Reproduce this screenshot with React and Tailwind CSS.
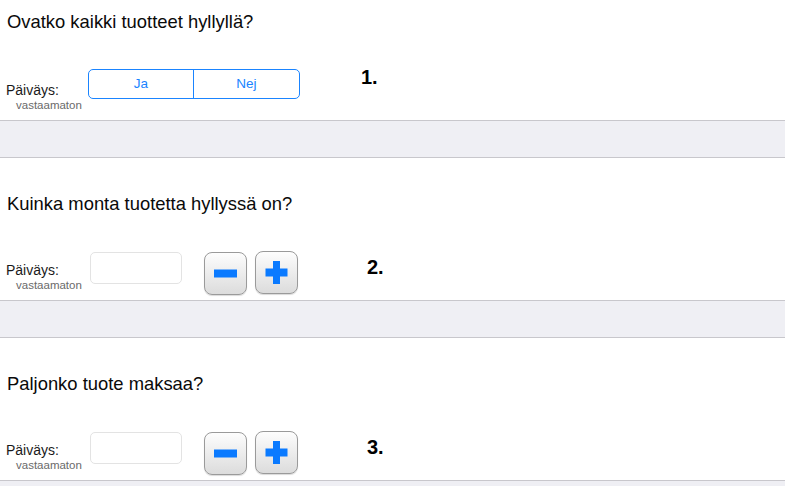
import React from "react";

const font = { fontFamily: '"Liberation Sans", Arial, sans-serif' };

function Label({ mt }) {
  return (
    <div className={`flex flex-col ${mt}`}>
      <div className="text-[14px] leading-[16px] text-[#1a1a1a]">Päiväys:</div>
      <div className="pl-[10px] text-[11.5px] leading-[14px] text-[#6a6a6a]">vastaamaton</div>
    </div>
  );
}

function StepButton({ kind, mt }) {
  return (
    <div
      className={`${mt} flex h-[43px] w-[43px] items-center justify-center rounded-[8px] border border-[#9a9a9a] bg-gradient-to-b from-[#fdfdfd] to-[#dcdcdc] shadow-[0_1px_1px_rgba(0,0,0,0.15)]`}
    >
      <svg width="23" height="23" viewBox="0 0 23 23">
        {kind === "plus" ? (
          <>
            <rect x="0.5" y="7.5" width="22" height="8" fill="#0a7aff" />
            <rect x="8" y="0" width="7" height="23" fill="#0a7aff" />
          </>
        ) : (
          <rect x="0" y="7.5" width="23" height="8" fill="#0a7aff" />
        )}
      </svg>
    </div>
  );
}

function Band() {
  return <div className="h-[38px] w-[785px] border-y border-[#c8c7cc] bg-[#efeff4]" />;
}

function NumberSection({ title, num }) {
  return (
    <div className="h-[142px] w-[785px] bg-white pt-[35px]">
      <div className="pl-[7px] text-[18.4px] leading-[22px] text-[#0a0a0a]">{title}</div>
      <div className="mt-[36px] flex items-start pl-[6px]">
        <div className="w-[84px]">
          <Label mt="mt-[11px]" />
        </div>
        <div className="mt-[1px] h-[32px] w-[92px] rounded-[5px] border border-[#e3e3e3] bg-white" />
        <div className="ml-[22px]">
          <StepButton kind="minus" mt="mt-[1px]" />
        </div>
        <div className="ml-[8px]">
          <StepButton kind="plus" mt="mt-0" />
        </div>
        <div className="ml-[69px] mt-[6px] text-[20px] font-bold leading-[20px] text-black">{num}</div>
      </div>
    </div>
  );
}

export default function App() {
  return (
    <div className="h-[486px] w-[812px] overflow-hidden bg-white" style={font}>
      <div className="h-[120px] w-[785px] bg-white pt-[11px]">
        <div className="pl-[7px] text-[18.4px] leading-[22px] text-[#0a0a0a]">Ovatko kaikki tuotteet hyllyllä?</div>
        <div className="mt-[34px] flex items-start pl-[6px]">
          <div className="w-[82px]">
            <Label mt="mt-[15px]" />
          </div>
          <div className="mt-[2px] flex h-[30px] w-[212px] overflow-hidden rounded-[5px] border border-[#1a84ff] text-[13.5px] text-[#1a84ff]">
            <div className="flex w-[105px] items-center justify-center border-r border-[#1a84ff]">Ja</div>
            <div className="flex flex-1 items-center justify-center">Nej</div>
          </div>
          <div className="ml-[61px] text-[20px] font-bold leading-[20px] text-black">1.</div>
        </div>
      </div>
      <Band />
      <NumberSection title="Kuinka monta tuotetta hyllyssä on?" num="2." />
      <Band />
      <NumberSection title="Paljonko tuote maksaa?" num="3." />
      <Band />
    </div>
  );
}
